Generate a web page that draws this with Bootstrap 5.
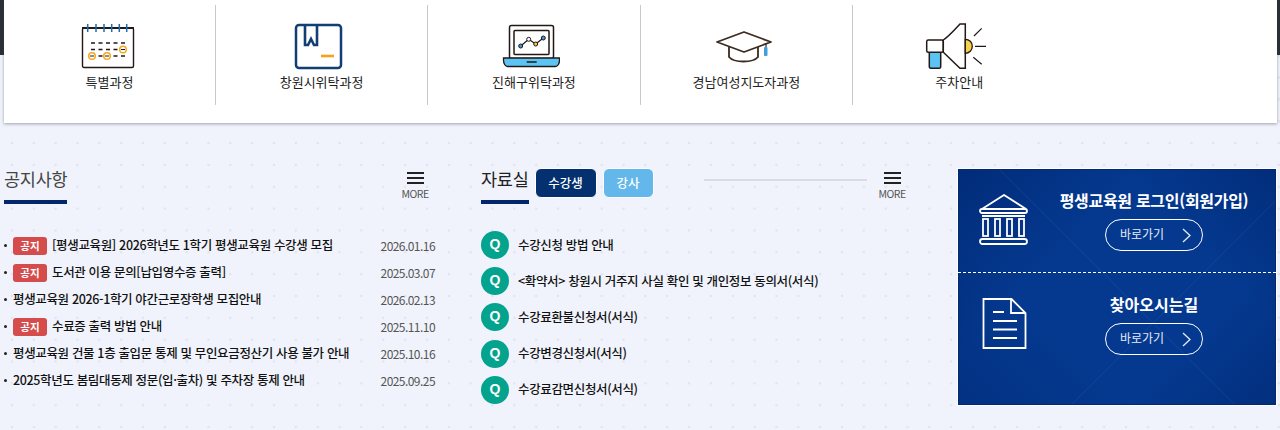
<!DOCTYPE html>
<html lang="ko">
<head>
  <meta charset="UTF-8" />
  <meta name="viewport" content="width=device-width, initial-scale=1.0"/>
  <title>평생교육원</title>
  <link rel="stylesheet" href="https://cdn.jsdelivr.net/npm/bootstrap@5.3.2/dist/css/bootstrap.min.css">
  <style>
    html, body { height: 430px; overflow: hidden; }
    body {
      font-family: "Noto Sans CJK KR", "Noto Sans", sans-serif;
      color: #111;
      background-color: #f0f3fb;
      background-image: radial-gradient(circle, #dfe3ee 1.2px, transparent 1.6px);
      background-size: 21.85px 21.85px;
      background-position: 1px 154px;
    }
    a { color: inherit; text-decoration: none; }
    .top-strip {
      height: 124px;
      padding: 0 3px 0 4px;
      background: linear-gradient(#2a3036, #2a3036) left top / 100% 55px no-repeat;
    }
    .quick-box {
      height: 123px;
      background: #fff;
      box-shadow: 0 1px 3px rgba(60, 60, 80, .45);
    }
    .quick-item {
      width: 212.4px;
      height: 100px;
      margin-top: 5px;
      border-right: 1px solid #c9c9c9;
      font-size: 13px;
      color: #222;
    }
    .quick-item:first-child { width: 211.9px; }
    .quick-item:last-child { border-right: 0; }
    .quick-icon { height: 48px; margin-top: 18px; margin-bottom: 1px; display: block; transform: translateX(-3px); }
    .quick-label { line-height: 20px; }

    .main-row { padding: 44px 4px 0 4px; }
    .notice-col { width: 433px; margin-right: 44px; }
    .data-col { width: 425px; margin-right: 52px; }
    .side-col { width: 318px; }

    .sec-head { height: 36px; position: relative; }
    .sec-title {
      font-size: 17.5px;
      line-height: 22px;
      letter-spacing: -.25px;
      color: #444;
      margin: 0;
      font-weight: 400;
      height: 36px;
      border-bottom: 4px solid #03256c;
    }
    .title-dark { color: #222; }
    .more-link { width: 28px; font-size: 10.5px; line-height: 12px; color: #555; letter-spacing: -.5px; text-align: center; margin-top: 4px; }
    .more-gap { margin-right: 8px; }
    .more-bars { display: block; width: 17px; height: 12px; margin: 0 auto 4px; border-top: 2px solid #222; border-bottom: 2px solid #222; position: relative; }
    .more-bars::after { content: ""; position: absolute; left: 0; right: 0; top: 3px; height: 2px; background: #222; }

    .tab-pill {
      height: 30px;
      line-height: 28px;
      padding: 0;
      text-align: center;
      font-size: 12.5px;
      font-weight: 500;
      color: #fff;
      border-radius: 6px;
      border: 1px solid #fff;
    }
    .tab-on { width: 62px; background: #04306f; margin-left: 6px; }
    .tab-off { width: 51px; background: #63b7ea; margin-left: 6px; }
    .head-rule { height: 2px; background: #d9dce2; margin: 11px 11px 0 50px; }

    .notice-list { list-style: none; margin: 28px 0 0; padding: 0; }
    .notice-list li { height: 27px; font-size: 12.5px; letter-spacing: -.35px; font-weight: 500; }
    .dot-mark { width: 3px; height: 3px; border-radius: 50%; background: #222; margin-right: 6px; flex: none; }
    .tag-red {
      width: 34px;
      height: 18px;
      line-height: 18px;
      text-align: center;
      font-size: 10.5px;
      font-weight: 700;
      letter-spacing: 0;
      color: #fff;
      background: #d44c4c;
      border-radius: 3px;
      margin-right: 5px;
      flex: none;
    }
    .notice-date { font-size: 12px; font-weight: 400; color: #555; letter-spacing: -.55px; margin-right: 2px; }

    .faq-list { list-style: none; margin: 23px 0 0; padding: 0; }
    .faq-list li { height: 36.2px; font-size: 12.5px; letter-spacing: -.35px; font-weight: 500; }
    .q-mark {
      width: 28px;
      height: 28px;
      line-height: 27px;
      border-radius: 50%;
      background: #04a38e;
      color: #fff;
      font-family: "Liberation Sans", sans-serif;
      font-size: 14px;
      font-weight: 700;
      letter-spacing: 0;
      text-align: center;
      margin-right: 9px;
      flex: none;
    }

    .side-panel {
      height: 236px;
      margin-top: 1px;
      background-color: #04398f;
      background-image:
        linear-gradient(45deg, transparent 49.8%, rgba(90, 150, 230, .09) 50%, transparent 50.3%),
        linear-gradient(135deg, transparent 62.8%, rgba(90, 150, 230, .09) 63%, transparent 63.3%),
        linear-gradient(135deg, rgba(0, 30, 100, .5) 0, transparent 34%),
        linear-gradient(45deg, rgba(0, 30, 100, .3) 0, transparent 30%),
        linear-gradient(225deg, rgba(0, 30, 100, .45) 0, transparent 28%),
        linear-gradient(315deg, rgba(0, 30, 100, .4) 0, transparent 26%);
      color: #fff;
      box-shadow: 0 0 0 1px #fff, inset 0 0 0 1px #02296e;
    }
    .side-block { padding: 25px 0 0 21px; height: 104px; border-bottom: 1px dashed #fff; }
    .side-block:last-child { height: 132px; border-bottom: 0; }
    .side-icon { width: 50px; flex: none; display: block; }
    .side-text { width: 200px; margin-left: 25px; margin-top: -4px; text-align: center; }
    .side-title { font-size: 16px; font-weight: 700; line-height: 20px; letter-spacing: -.3px; margin: 0 0 9px; }
    .side-title-wide { letter-spacing: 0; }
    .go-btn {
      width: 98px;
      height: 32px;
      line-height: 28px;
      padding: 0 0 0 14px;
      border: 1.5px solid #fff;
      border-radius: 16px;
      font-size: 12px;
      color: #e6ebf7;
      text-align: left;
      position: relative;
    }
    .go-btn svg { position: absolute; right: 9px; top: 7px; }
  </style>
</head>
<body>

<!-- quick menu -->
<div class="top-strip">
  <div class="quick-box d-flex">
    <a href="#" class="quick-item text-center">
      <svg class="quick-icon mx-auto" width="58" height="48" viewBox="-4 0 58 48" fill="none">
        <rect x="1.500" y="5" width="51" height="39.500" rx="1.500" fill="#fff" stroke="#231815" stroke-width="1.400"/>
        <path d="M1 5h52" stroke="#231815" stroke-width="2"/>
        <path d="M6.700 1v8M15 1v8M23 1v8M30.700 1v8M38.300 1v8M45.700 1v8" stroke="#1a6fb0" stroke-width="1.500"/>
        <path d="M10 20h34M10 26.500h34M10 33h34" stroke="#231815" stroke-width="1.300" stroke-dasharray="4 3.500"/>
        <g fill="#fff" stroke="#f5a81c" stroke-width="1.500"><circle cx="11" cy="33" r="3.300"/><circle cx="26" cy="33" r="3.300"/><circle cx="42" cy="26.500" r="3.300"/></g>
        <path d="M9 33h4M24 33h4M40 26.500h4" stroke="#231815"/>
      </svg>
      <div class="quick-label">특별과정</div>
    </a>
    <a href="#" class="quick-item text-center">
      <svg class="quick-icon mx-auto" width="50" height="48" viewBox="0 0 50 48" fill="none">
        <rect x="2" y="2" width="45" height="43" rx="3" fill="#fff" stroke="#123e73" stroke-width="2.500"/>
        <path d="M11 3v19h3l3-6 3 6h3V3" stroke="#123e73" stroke-width="2.600"/>
        <path d="M27 33h13" stroke="#f9a01b" stroke-width="2.600"/>
      </svg>
      <div class="quick-label">창원시위탁과정</div>
    </a>
    <a href="#" class="quick-item text-center">
      <svg class="quick-icon mx-auto" width="58" height="48" viewBox="0 0 58 48" fill="none">
        <rect x="7.500" y="2.500" width="44" height="33" rx="2" fill="#fff" stroke="#231815" stroke-width="1.500"/>
        <rect x="12" y="7.500" width="35" height="24" rx="1" fill="#fff" stroke="#231815" stroke-width="1.500"/>
        <path d="M1.500 35h56v2c0 4-2 6.500-4 6.500h-48c-2 0-4-2.500-4-6.500z" fill="#5cc4f5" stroke="#231815" stroke-width="1.300"/>
        <path d="M24.700 39h10" stroke="#231815" stroke-width="1.500"/>
        <path d="M18.700 23l8-6.700 7 4.700 7.600-6" stroke="#231815" stroke-width="1.200"/>
        <circle cx="18.700" cy="23" r="2" fill="#3a9ad9" stroke="#231815"/><circle cx="26.700" cy="16.300" r="2" fill="#fff" stroke="#231815"/>
        <circle cx="33.700" cy="21" r="2" fill="#f6c736" stroke="#231815"/><circle cx="41.300" cy="15" r="2" fill="#3a9ad9" stroke="#231815"/>
      </svg>
      <div class="quick-label">진해구위탁과정</div>
    </a>
    <a href="#" class="quick-item text-center">
      <svg class="quick-icon mx-auto" width="58" height="48" viewBox="-1 0 58 48" fill="none">
        <path d="M29 9L2 19l27 10 27-10z" fill="#fff" stroke="#3d2a20" stroke-width="1.800" stroke-linejoin="round"/>
        <path d="M14 24v10c5 6 24 6 29 0V24" stroke="#3d2a20" stroke-width="1.800"/>
        <path d="M51 20v5" stroke="#3d2a20" stroke-width="1.200"/>
        <rect x="49" y="24" width="3.500" height="9" rx="1" fill="#3f9fdc"/>
      </svg>
      <div class="quick-label">경남여성지도자과정</div>
    </a>
    <a href="#" class="quick-item text-center">
      <svg class="quick-icon mx-auto" width="62" height="48" viewBox="0 0 62 48" fill="none">
        <path d="M4.300 29.300h11.400v14c0 1.500-.5 2-1.500 2H5.800c-1 0-1.500-.5-1.500-2z" fill="#5cc4f5" stroke="#231815" stroke-width="1.500"/>
        <rect x="1.700" y="17" width="16.600" height="12.300" rx="1.500" fill="#fff" stroke="#231815" stroke-width="1.500"/>
        <path d="M18.300 17c6-4 11-10 16.700-16h5.300v44.300H35L18.300 29.300z" fill="#fff" stroke="#231815" stroke-width="1.500"/>
        <path d="M40.300 16.300c4 0 7 3 7 7s-3 7-7 7z" fill="#f6d24a" stroke="#231815" stroke-width="1.300"/>
        <path d="M49 13l7.700-7.700M50 23.300h11M48.300 34.300l8.400 7" stroke="#231815" stroke-width="1.200"/>
      </svg>
      <div class="quick-label">주차안내</div>
    </a>
  </div>
</div>

<div class="main-row d-flex">
  <!-- notice -->
  <section class="notice-col">
    <div class="sec-head d-flex justify-content-between">
      <h2 class="sec-title">공지사항</h2>
      <a href="#" class="more-link more-gap"><span class="more-bars"></span>MORE</a>
    </div>
    <ul class="notice-list">
      <li class="d-flex align-items-center"><span class="dot-mark"></span><span class="tag-red">공지</span><a href="#" class="flex-grow-1">[평생교육원] 2026학년도 1학기 평생교육원 수강생 모집</a><span class="notice-date">2026.01.16</span></li>
      <li class="d-flex align-items-center"><span class="dot-mark"></span><span class="tag-red">공지</span><a href="#" class="flex-grow-1">도서관 이용 문의[납입영수증 출력]</a><span class="notice-date">2025.03.07</span></li>
      <li class="d-flex align-items-center"><span class="dot-mark"></span><a href="#" class="flex-grow-1">평생교육원 2026-1학기 야간근로장학생 모집안내</a><span class="notice-date">2026.02.13</span></li>
      <li class="d-flex align-items-center"><span class="dot-mark"></span><span class="tag-red">공지</span><a href="#" class="flex-grow-1">수료증 출력 방법 안내</a><span class="notice-date">2025.11.10</span></li>
      <li class="d-flex align-items-center"><span class="dot-mark"></span><a href="#" class="flex-grow-1">평생교육원 건물 1층 출입문 통제 및 무인요금정산기 사용 불가 안내</a><span class="notice-date">2025.10.16</span></li>
      <li class="d-flex align-items-center"><span class="dot-mark"></span><a href="#" class="flex-grow-1">2025학년도 봄림대동제 정문(입·출차) 및 주차장 통제 안내</a><span class="notice-date">2025.09.25</span></li>
    </ul>
  </section>

  <!-- data room -->
  <section class="data-col">
    <div class="sec-head d-flex">
      <h2 class="sec-title title-dark">자료실</h2>
      <a href="#" class="tab-pill tab-on">수강생</a>
      <a href="#" class="tab-pill tab-off">강사</a>
      <div class="head-rule flex-grow-1"></div>
      <a href="#" class="more-link"><span class="more-bars"></span>MORE</a>
    </div>
    <ul class="faq-list">
      <li class="d-flex align-items-center"><span class="q-mark">Q</span><a href="#">수강신청 방법 안내</a></li>
      <li class="d-flex align-items-center"><span class="q-mark">Q</span><a href="#">&lt;확약서&gt; 창원시 거주지 사실 확인 및 개인정보 동의서(서식)</a></li>
      <li class="d-flex align-items-center"><span class="q-mark">Q</span><a href="#">수강료환불신청서(서식)</a></li>
      <li class="d-flex align-items-center"><span class="q-mark">Q</span><a href="#">수강변경신청서(서식)</a></li>
      <li class="d-flex align-items-center"><span class="q-mark">Q</span><a href="#">수강료감면신청서(서식)</a></li>
    </ul>
  </section>

  <!-- login / directions -->
  <aside class="side-col">
    <div class="side-panel">
      <div class="side-block d-flex align-items-start">
        <svg class="side-icon" width="50" height="52" viewBox="0 0 50 52" fill="none" stroke="#fff" stroke-width="1.800">
          <path d="M3 15L25 1l22 14"/>
          <rect x="1" y="15" width="47" height="4" rx="2"/>
          <path d="M3 22h43"/>
          <rect x="4" y="25" width="5" height="17"/><rect x="16" y="25" width="5" height="17"/><rect x="28" y="25" width="5" height="17"/><rect x="40" y="25" width="5" height="17"/>
          <rect x="1" y="45" width="47" height="5" rx="2.500"/>
        </svg>
        <div class="side-text">
          <h3 class="side-title">평생교육원 로그인(회원가입)</h3>
          <a href="#" class="go-btn d-inline-block">바로가기<svg width="12" height="16" viewBox="0 0 12 16" fill="none" stroke="#e6ebf7" stroke-width="1.300"><path d="M2 2l7 6.500L2 15"/></svg></a>
        </div>
      </div>
      <div class="side-block d-flex align-items-start">
        <svg class="side-icon" width="50" height="52" viewBox="0 0 50 52" fill="none" stroke="#fff" stroke-width="1.800">
          <path d="M4.500 1h28l14 14v35h-42z"/>
          <path d="M32 1v14h14"/>
          <path d="M14 14h11M14 23h24M14 31.500h24M14 40h24"/>
        </svg>
        <div class="side-text">
          <h3 class="side-title side-title-wide">찾아오시는길</h3>
          <a href="#" class="go-btn d-inline-block">바로가기<svg width="12" height="16" viewBox="0 0 12 16" fill="none" stroke="#e6ebf7" stroke-width="1.300"><path d="M2 2l7 6.500L2 15"/></svg></a>
        </div>
      </div>
    </div>
  </aside>
</div>

</body>
</html>
